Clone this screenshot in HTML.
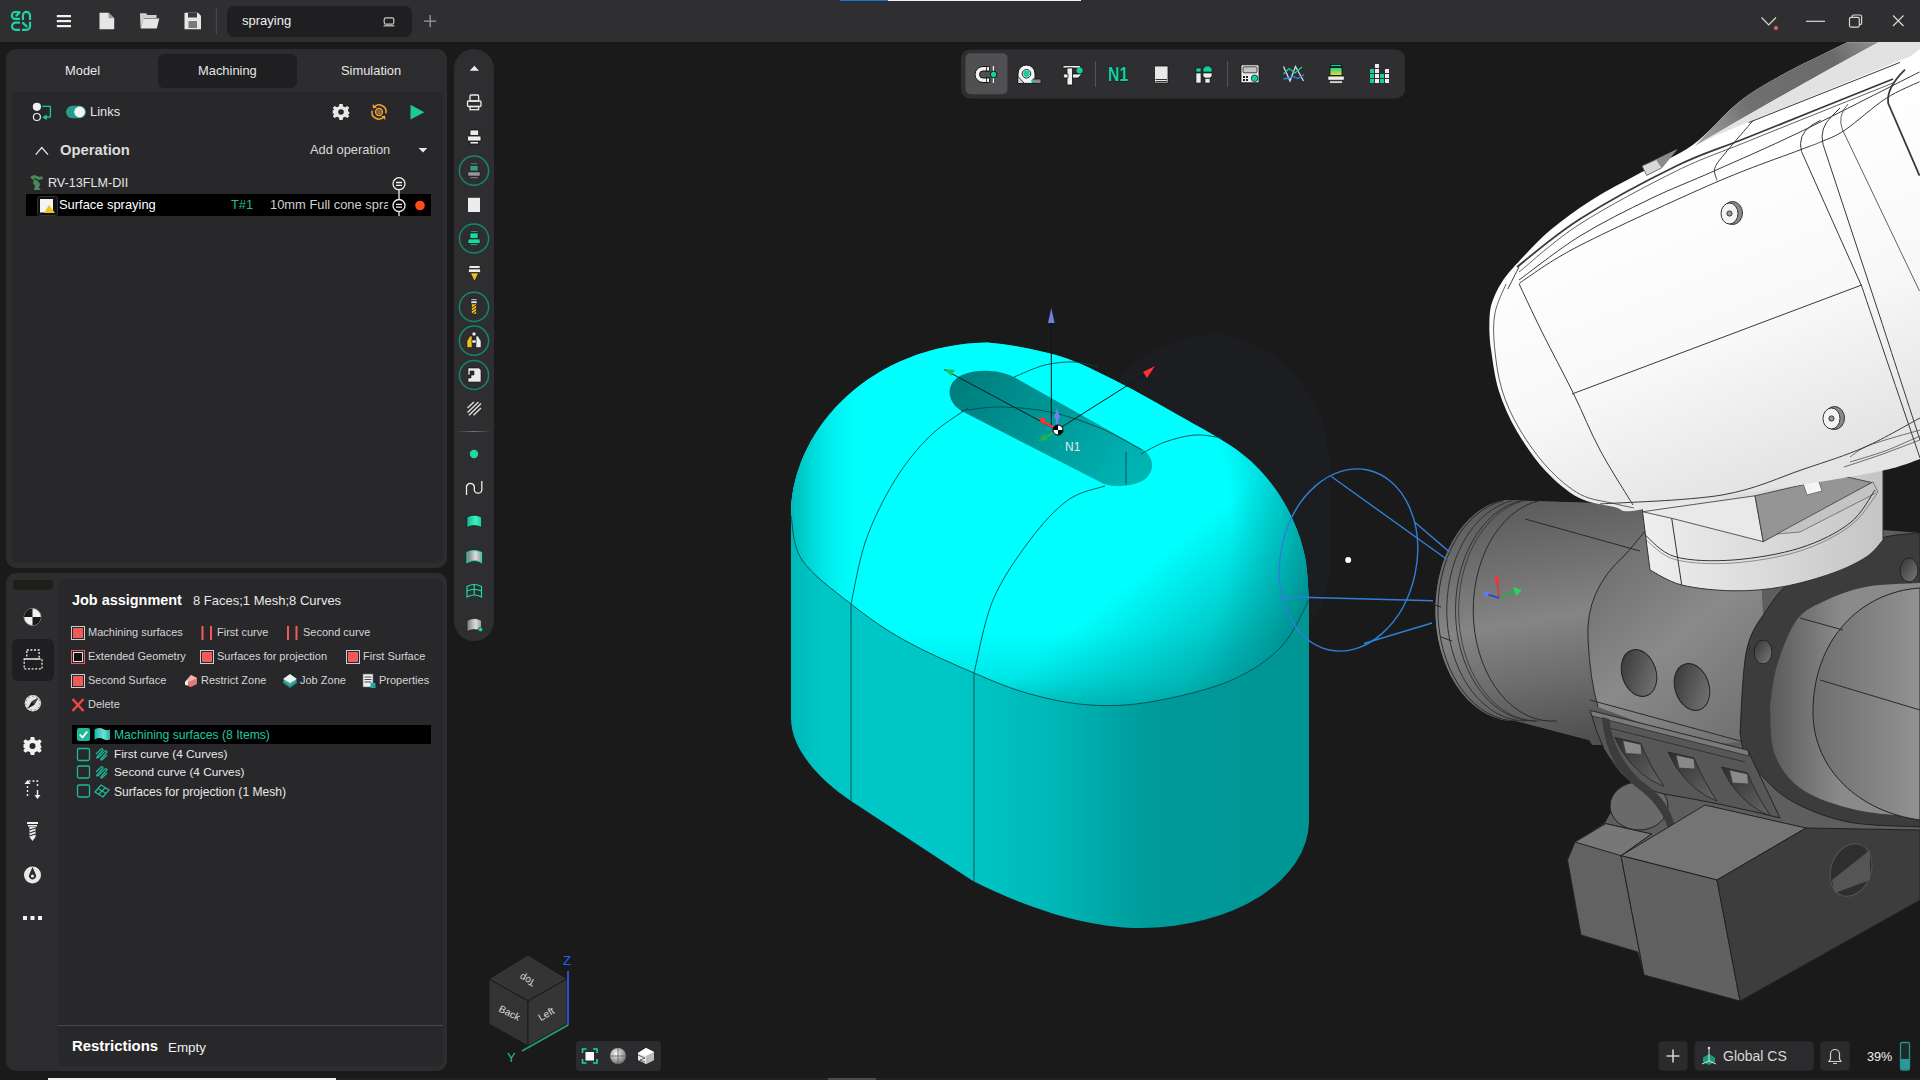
<!DOCTYPE html>
<html><head><meta charset="utf-8">
<style>
*{margin:0;padding:0;box-sizing:border-box}
html,body{width:1920px;height:1080px;overflow:hidden;background:#1a1a1a;font-family:"Liberation Sans",sans-serif;color:#e6e6e6}
.a{position:absolute}
.t{position:absolute;white-space:nowrap;line-height:1}
svg{position:absolute;overflow:visible}
</style></head><body>
<svg width="1920" height="1080" style="left:0;top:0"><path d="M1110 390 C1116.7 383.7 1132.0 361.3 1150.0 352.0 C1168.0 342.7 1196.3 332.7 1218.0 334.0 C1239.7 335.3 1263.3 347.3 1280.0 360.0 C1296.7 372.7 1309.7 393.3 1318.0 410.0 C1326.3 426.7 1328.0 451.7 1330.0 460.0 L1330 570 C1328.3 576.7 1326.7 598.3 1320.0 610.0 C1313.3 621.7 1295.0 635.0 1290.0 640.0 L1110 640 Z" fill="#1c1d21"/></svg>
<svg width="1920" height="1080" style="left:0;top:0"><defs>
<linearGradient id="gcyl" x1="1500" y1="500" x2="1540" y2="745" gradientUnits="userSpaceOnUse">
<stop offset="0" stop-color="#5a5a5a"/><stop offset="0.3" stop-color="#727272"/><stop offset="0.5" stop-color="#858585"/><stop offset="0.75" stop-color="#6c6c6c"/><stop offset="1" stop-color="#505050"/></linearGradient>
<linearGradient id="gclamp" x1="1590" y1="540" x2="1760" y2="740" gradientUnits="userSpaceOnUse">
<stop offset="0" stop-color="#6a6a6a"/><stop offset="0.5" stop-color="#8a8a8a"/><stop offset="1" stop-color="#6e6e6e"/></linearGradient>
<linearGradient id="gslot" x1="0" y1="0" x2="1" y2="1"><stop offset="0" stop-color="#2e2e2e"/><stop offset="1" stop-color="#666"/></linearGradient>
<linearGradient id="ghole" x1="0" y1="0" x2="1" y2="1"><stop offset="0" stop-color="#333"/><stop offset="1" stop-color="#7a7a7a"/></linearGradient>
<linearGradient id="gcyl2" x1="1770" y1="0" x2="1840" y2="0" gradientUnits="userSpaceOnUse"><stop offset="0" stop-color="#5a5a5a"/><stop offset="1" stop-color="#8a8a8a"/></linearGradient>
<linearGradient id="gcyl3" x1="1813" y1="0" x2="1920" y2="0" gradientUnits="userSpaceOnUse"><stop offset="0" stop-color="#6e6e6e"/><stop offset="1" stop-color="#929292"/></linearGradient>
<linearGradient id="wjoint" x1="1650" y1="0" x2="1885" y2="0" gradientUnits="userSpaceOnUse"><stop offset="0" stop-color="#eeeeee"/><stop offset="0.5" stop-color="#dadada"/><stop offset="1" stop-color="#c4c4c4"/></linearGradient>
<linearGradient id="warm" x1="1600" y1="200" x2="1720" y2="500" gradientUnits="userSpaceOnUse"><stop offset="0" stop-color="#ffffff"/><stop offset="0.55" stop-color="#f8f8f8"/><stop offset="1" stop-color="#e4e4e4"/></linearGradient>
<linearGradient id="wcap" x1="1490" y1="300" x2="1600" y2="400" gradientUnits="userSpaceOnUse"><stop offset="0" stop-color="#d0d0d0"/><stop offset="1" stop-color="#ececec"/></linearGradient>
<linearGradient id="wgroove" x1="1700" y1="140" x2="1870" y2="45" gradientUnits="userSpaceOnUse"><stop offset="0" stop-color="#a0a0a0"/><stop offset="0.3" stop-color="#707070"/><stop offset="0.8" stop-color="#6a6a6a"/><stop offset="1" stop-color="#8a8a8a"/></linearGradient>
</defs><path d="M1504 500 L1650 505 L1760 520 L1883 530 L1920 533 L1920 900 L1740 1001 L1644 975 L1638 952 L1581 935 L1567.5 860 L1575 842 L1605 823 L1612 810 L1624 790 L1631 782 Q1610 765 1601 740 L1589 740 L1516 721 A79 111 0 0 1 1504 500 Z" fill="#5e5e5e"/>
<path d="M1504 500 L1660 505 L1700 560 L1760 600 L1760 740 L1700 745 L1592 745 L1589 740 L1516 721 A79 111 0 0 1 1504 500 Z" fill="url(#gcyl)"/>
<path d="M1504.0 500.5 A79 111 0 0 0 1516.0 721" fill="none" stroke="#2a2a2a" stroke-width="1"/>
<path d="M1512.8 500.5 A79 111 0 0 0 1525.9 721" fill="none" stroke="#2a2a2a" stroke-width="0.9"/>
<path d="M1521.6 500.5 A79 111 0 0 0 1535.8 721" fill="none" stroke="#2a2a2a" stroke-width="0.9"/>
<path d="M1524.8 500.5 A79 111 0 0 0 1539.4 721" fill="none" stroke="#2a2a2a" stroke-width="0.7"/>
<path d="M1540.0 500.5 A79 111 0 0 0 1556.5 721" fill="none" stroke="#2a2a2a" stroke-width="1"/>
<path d="M1432 604 L1441 607 M1441 637 L1452 641" stroke="#2a2a2a" fill="none"/>
<path d="M1660 520 L1625 555 Q1585 590 1588 639 Q1590 680 1598 707 L1700 745 L1770 740 L1760 560 Z" fill="url(#gclamp)"/>
<path d="M1646 530 L1625 555 Q1585 590 1588 639 Q1590 680 1598 707" fill="none" stroke="#2a2a2a"/>
<path d="M1590 700 L1755 745" fill="none" stroke="#2a2a2a"/>
<path d="M1525 519 L1640 551" fill="none" stroke="#2a2a2a"/>
<ellipse cx="1639" cy="673" rx="17" ry="24" transform="rotate(-18 1639 673)" fill="url(#ghole)" stroke="#222"/>
<ellipse cx="1692" cy="687" rx="17" ry="24" transform="rotate(-18 1692 687)" fill="url(#ghole)" stroke="#222"/>
<path d="M1740 733 C1741.1 719.2 1742.2 670.5 1746.7 650.0 C1751.2 629.5 1759.0 621.7 1766.7 610.0 C1774.4 598.3 1779.7 590.0 1793.0 580.0 C1806.3 570.0 1831.1 557.2 1846.7 550.0 C1862.3 542.8 1874.5 539.5 1886.7 536.7 C1898.9 533.9 1914.5 533.6 1920.0 533.0 L1920 827 C1907.8 826.1 1868.4 826.2 1846.7 821.7 C1825.0 817.2 1805.0 808.6 1790.0 800.0 C1775.0 791.4 1764.5 778.3 1756.7 770.0 C1748.9 761.7 1745.3 753.3 1743.0 750.0 Z" fill="#3c3c3c" stroke="#222"/>
<ellipse cx="1763" cy="652" rx="9" ry="12" fill="url(#ghole)" stroke="#222"/>
<ellipse cx="1909" cy="570" rx="9" ry="12" fill="url(#ghole)" stroke="#222"/>
<path d="M1770 707 C1771.1 700.3 1772.2 681.2 1776.7 666.7 C1781.2 652.2 1788.4 631.1 1796.7 620.0 C1805.0 608.9 1815.0 605.5 1826.7 600.0 C1838.4 594.5 1851.2 589.5 1866.7 586.7 C1882.2 583.9 1911.1 583.6 1920.0 583.0 L1920 817 C1909.5 815.8 1876.2 814.5 1856.7 810.0 C1837.2 805.5 1816.6 799.2 1803.0 790.0 C1789.4 780.8 1780.5 768.8 1775.0 755.0 C1769.5 741.2 1770.8 715.0 1770.0 707.0 Z" fill="url(#gcyl2)"/>
<path d="M1920 588 C1860 592 1813 640 1813 712 C1813 770 1860 812 1920 820 Z" fill="url(#gcyl3)" stroke="#222"/>
<path d="M1800 618 L1843 630 M1820 680 L1920 710" stroke="#2a2a2a" fill="none"/>
<ellipse cx="1639" cy="806" rx="29" ry="24" fill="#6a6a6a" stroke="#222"/>
<path d="M1590.4 710.6 L1747.8 750.3 L1780 818 Q1720 803 1664 794 Q1625 785 1604 749 Q1595 730 1590.4 710.6 Z" fill="#575757" stroke="#222"/>
<path d="M1590.4 710.6 L1747.8 750.3 L1749 756 L1592 716 Z" fill="#7a7a7a" stroke="#222" stroke-width="0.7"/>
<path d="M1605 727 L1745 762" fill="none" stroke="#2a2a2a" stroke-width="0.8"/>
<path d="M1602 717 Q1605 765 1640 790 Q1660 805 1668 828 L1675 826 Q1668 800 1648 786 Q1615 762 1609 719 Z" fill="#3c3c3c"/>
<path d="M1614.8 737.4 L1640.8 743.4 Q1650.8 767.4 1663.8 786.4 Q1639.8 777.4 1622.8 752.4 Z" fill="url(#gslot)" stroke="#222" stroke-width="0.8"/>
<path d="M1622.8 740.4 L1640.8 744.4 L1641.8 754.4 L1625.8 753.4 Z" fill="#8a8a8a" stroke="#333" stroke-width="0.6"/>
<path d="M1668 752 L1694 758 Q1704 782 1717 801 Q1693 792 1676 767 Z" fill="url(#gslot)" stroke="#222" stroke-width="0.8"/>
<path d="M1676 755 L1694 759 L1695 769 L1679 768 Z" fill="#8a8a8a" stroke="#333" stroke-width="0.6"/>
<path d="M1721.5 767 L1747.5 773 Q1757.5 797 1770.5 816 Q1746.5 807 1729.5 782 Z" fill="url(#gslot)" stroke="#222" stroke-width="0.8"/>
<path d="M1729.5 770 L1747.5 774 L1748.5 784 L1732.5 783 Z" fill="#8a8a8a" stroke="#333" stroke-width="0.6"/>
<path d="M1567.5 860 L1575 842 L1605.7 823.6 L1651.5 834 L1621 855.7 L1644 975 L1637.8 952 L1581 935 Z" fill="#626262" stroke="#222"/>
<path d="M1575 842 L1605.7 823.6 L1651.5 834 L1621 855.7 Z" fill="#777" stroke="#222"/>
<path d="M1621 855.7 L1705 805 L1806 828 L1717 880 Z" fill="#747474" stroke="#222"/>
<path d="M1621 855.7 L1717 880 L1740 1001 L1644 975 Z" fill="#616161" stroke="#222"/>
<path d="M1717 880 L1806 828 L1920 830 L1920 900 L1740 1001 Z" fill="#3d3d3d" stroke="#222"/>
<ellipse cx="1851" cy="870" rx="20" ry="27" transform="rotate(20 1851 870)" fill="#2e2e2e" stroke="#555"/>
<path d="M1832 880 L1870 850 L1870 880 L1835 893 Z" fill="#555"/>
<path d="M1642.5 470 L1642.5 511.7 L1650 570 C1655.3 572.5 1667.9 581.5 1681.7 585.0 C1695.5 588.5 1716.1 590.5 1733.0 590.8 C1749.9 591.1 1766.3 589.7 1783.0 586.7 C1799.7 583.7 1819.0 578.0 1833.0 573.0 C1847.0 568.0 1858.4 562.2 1866.7 556.7 C1875.0 551.2 1880.3 542.8 1883.0 540.0 L1883 440 Z" fill="url(#wjoint)" stroke="#333" stroke-width="1"/>
<path d="M1642.5 511.7 L1755 495.8 L1763.3 541.7 L1671.7 518.3 Z" fill="#e9e9e9" stroke="#333" stroke-width="0.8"/>
<path d="M1755 495.8 L1841.7 475.8 L1871.7 482.5 L1763.3 541.7 Z" fill="#959595" stroke="#333" stroke-width="0.8"/>
<path d="M1777 534 L1873 482 L1878 492 L1800 532 Z" fill="#c4c4c4" stroke="#444" stroke-width="0.6"/>
<path d="M1803 483 L1818 479 L1822 491 L1807 495 Z" fill="#f4f4f4" stroke="#444" stroke-width="0.6"/>
<path d="M1671.7 518.3 L1681.7 585" fill="none" stroke="#333"/>
<path d="M1645.0 535.0 C1650.0 538.6 1660.3 552.5 1675.0 556.7 C1689.7 560.9 1712.2 561.5 1733.0 560.0 C1753.8 558.5 1780.5 554.2 1800.0 548.0 C1819.5 541.8 1837.5 532.7 1850.0 523.0 C1862.5 513.3 1870.8 495.5 1875.0 490.0" fill="none" stroke="#333"/>
<path d="M1645.0 539.0 C1650.0 542.4 1660.3 555.5 1675.0 559.5 C1689.7 563.5 1712.2 564.4 1733.0 563.0 C1753.8 561.6 1780.5 557.2 1800.0 551.0 C1819.5 544.8 1837.2 535.5 1850.0 526.0 C1862.8 516.5 1872.5 499.3 1877.0 494.0" fill="none" stroke="#555" stroke-width="0.6"/>
<path d="M1489.3 330.0 C1489.6 326.0 1488.9 314.0 1491.0 306.0 C1493.1 298.0 1497.0 289.7 1502.0 282.0 C1507.0 274.3 1512.6 268.3 1520.7 259.6 C1528.8 250.9 1538.7 239.9 1550.4 230.0 C1562.1 220.1 1575.9 210.0 1591.0 200.4 C1606.1 190.8 1624.0 181.9 1641.0 172.6 C1658.0 163.3 1676.7 156.6 1693.0 144.8 C1709.3 133.0 1723.9 113.8 1739.0 102.0 C1754.1 90.2 1765.6 84.0 1783.7 74.0 C1801.8 64.0 1836.8 47.5 1847.4 42.2 L1920 42 L1920 459 C1913.5 461.0 1903.8 466.2 1881.0 471.0 C1858.2 475.8 1814.8 482.8 1783.0 487.6 C1751.2 492.4 1715.2 496.1 1690.0 500.0 C1664.8 503.9 1644.6 509.8 1632.0 511.0 C1619.4 512.2 1623.2 509.2 1614.4 507.0 C1605.6 504.8 1590.4 503.8 1578.9 497.8 C1567.4 491.8 1556.0 482.1 1545.6 471.0 C1535.2 459.9 1524.5 444.3 1516.7 431.0 C1508.9 417.7 1503.2 404.5 1498.9 391.0 C1494.6 377.5 1492.7 360.2 1491.1 350.0 C1489.5 339.8 1489.6 333.3 1489.3 330.0 Z" fill="url(#warm)"/>
<path d="M1694.8 146 C1702.2 138.7 1724.2 114.0 1739.0 102.0 C1753.8 90.0 1765.6 84.0 1783.7 74.0 C1801.8 64.0 1836.8 47.5 1847.4 42.2 L1878.5 42.2 Q1790 90 1694.8 146 Z" fill="url(#wgroove)"/>
<path d="M1694.8 146 Q1790 90 1878.5 42.2 L1920 42 L1920 49 L1911 56 L1717 135 Z" fill="#e2e2e2"/>
<path d="M1642 166 L1656 159.6 L1677 149.4 L1661.5 168 L1646.7 175.4 Z" fill="#d8d8d8" stroke="#555" stroke-width="0.8"/><path d="M1656 159.6 L1677 149.4 L1661.5 168 Z" fill="#8a8a8a"/>
<path d="M1517.0 267.0 C1527.5 259.0 1553.5 235.8 1580.0 219.0 C1606.5 202.2 1648.2 179.7 1676.3 166.0 C1704.4 152.3 1712.5 151.5 1748.6 137.0 C1784.7 122.5 1868.9 88.7 1893.0 79.0" fill="none" stroke="#3a3a3a" stroke-width="1.8"/>
<path d="M1519.0 272.0 C1529.2 264.0 1553.8 240.8 1580.0 224.0 C1606.2 207.2 1648.2 184.8 1676.3 171.0 C1704.4 157.2 1712.5 155.7 1748.6 141.0 C1784.7 126.3 1868.9 92.7 1893.0 83.0" fill="none" stroke="#3a3a3a" stroke-width="0.8"/>
<path d="M1519.0 280.0 C1529.2 272.7 1558.2 249.5 1580.0 236.0 C1601.8 222.5 1627.5 209.9 1650.0 199.0 C1672.5 188.1 1689.8 181.9 1714.8 170.7 C1739.8 159.5 1765.9 148.4 1800.0 132.0 C1834.1 115.5 1899.6 82.0 1919.5 72.0" fill="none" stroke="#3a3a3a" stroke-width="1"/>
<path d="M1519.5 283.0 C1529.6 276.7 1547.5 262.1 1580.0 245.4 C1612.5 228.7 1678.3 198.7 1714.8 182.8 C1751.3 167.0 1781.3 157.1 1799.0 150.3 C1816.7 143.5 1813.1 145.3 1820.8 141.9 C1828.5 138.5 1834.2 137.2 1845.0 130.0 C1855.8 122.8 1873.4 106.5 1885.8 98.5 C1898.2 90.5 1913.9 84.5 1919.5 81.7" fill="none" stroke="#3a3a3a" stroke-width="1"/>
<path d="M1748.6 122.6 L1900 62.4" fill="none" stroke="#3a3a3a" stroke-width="1"/>
<path d="M1717.0 180.4 C1716.6 178.4 1713.5 172.8 1714.8 168.4 C1716.0 164.0 1718.1 162.0 1724.5 154.0 C1730.9 146.0 1748.6 125.8 1753.4 120.2" fill="none" stroke="#3a3a3a" stroke-width="1"/>
<path d="M1861.7 286.3 L1801.5 151.5 Q1797 135 1812 125 L1820.8 120.2" fill="none" stroke="#3a3a3a" stroke-width="1"/>
<path d="M1881 320 L1823 144.3 Q1819 128 1832 116 L1840 108" fill="none" stroke="#3a3a3a" stroke-width="1"/>
<path d="M1919.5 291 L1842.5 129.8 Q1837 116 1848 104" fill="none" stroke="#3a3a3a" stroke-width="0.8"/>
<path d="M1919.5 175.6 L1888.2 103.3 Q1886 88 1905 69.6" fill="none" stroke="#3a3a3a" stroke-width="1.8"/>
<path d="M1572 394 L1861.7 285" fill="none" stroke="#3a3a3a" stroke-width="1"/>
<path d="M1507.8 289.0 C1509.7 285.3 1517.1 270.7 1519.0 267.0" fill="none" stroke="#3a3a3a" stroke-width="1"/>
<path d="M1519.0 283.7 C1522.7 291.4 1531.9 311.6 1541.0 330.0 C1550.1 348.4 1563.9 374.0 1573.7 394.0 C1583.5 414.0 1590.1 431.5 1600.0 450.0 C1609.9 468.5 1627.5 495.8 1633.0 505.0" fill="none" stroke="#3a3a3a" stroke-width="1"/>
<path d="M1506.0 284.0 C1504.2 288.8 1496.9 302.6 1495.0 313.0 C1493.1 323.4 1493.3 333.9 1494.5 346.7 C1495.7 359.5 1497.8 376.3 1502.0 390.0 C1506.2 403.7 1511.8 416.0 1519.5 429.0 C1527.2 442.0 1537.8 457.1 1548.0 468.0 C1558.2 478.9 1569.5 488.6 1580.5 494.5 C1591.5 500.4 1605.1 501.2 1614.0 503.5 C1622.9 505.8 1630.7 507.2 1634.0 508.0" fill="none" stroke="#3a3a3a" stroke-width="0.8"/>
<path d="M1600.0 504.0 C1620.3 502.5 1688.0 500.8 1722.0 495.0 C1756.0 489.2 1780.2 477.0 1804.0 469.0 C1827.8 461.0 1845.7 455.5 1865.0 447.0 C1884.3 438.5 1910.8 422.8 1920.0 418.0" fill="none" stroke="#3a3a3a" stroke-width="1"/>
<path d="M1844.0 467.0 C1850.0 465.0 1867.3 459.5 1880.0 455.0 C1892.7 450.5 1913.3 442.5 1920.0 440.0" fill="none" stroke="#3a3a3a" stroke-width="0.7"/>
<path d="M1850.0 462.0 C1855.8 460.2 1873.3 455.3 1885.0 451.0 C1896.7 446.7 1914.2 438.5 1920.0 436.0" fill="none" stroke="#3a3a3a" stroke-width="0.7"/>
<path d="M1850.0 457.0 C1853.3 455.0 1858.3 449.5 1870.0 445.0 C1881.7 440.5 1911.7 432.5 1920.0 430.0" fill="none" stroke="#3a3a3a" stroke-width="0.7"/>
<path d="M1861.7 286.3 C1871.4 314.9 1910.3 429.4 1920.0 458.0" fill="none" stroke="#3a3a3a" stroke-width="1"/>
<path d="M1881.0 320.0 C1887.5 340.0 1913.5 420.0 1920.0 440.0" fill="none" stroke="#3a3a3a" stroke-width="1"/>
<ellipse cx="1732.5" cy="213" rx="10" ry="11.5" fill="#8a8a8a" stroke="#333"/><ellipse cx="1729.5" cy="213.5" rx="8.5" ry="10.5" fill="#f4f4f4" stroke="#333"/><circle cx="1729.5" cy="213.5" r="2.6" fill="#999" stroke="#333"/>
<ellipse cx="1834.5" cy="418" rx="10" ry="11.5" fill="#8a8a8a" stroke="#333"/><ellipse cx="1831.5" cy="418.5" rx="8.5" ry="10.5" fill="#f4f4f4" stroke="#333"/><circle cx="1831.5" cy="418.5" r="2.6" fill="#999" stroke="#333"/>
<g stroke-width="1.5" fill="none"><path d="M1499 598 L1497 580" stroke="#e03030"/><path d="M1499 598 L1517 590" stroke="#20b040"/><path d="M1499 598 L1486 594" stroke="#2040e0"/></g>
<path d="M1494 582 L1497 574 L1500 582 Z" fill="#ff3030"/><path d="M1513 587 L1522 590 L1516 596 Z" fill="#30d060"/><path d="M1489 590 L1483 593 L1488 597 Z" fill="#5080ff"/></svg>
<svg width="1920" height="1080" style="left:0;top:0">
<defs>
<linearGradient id="cside" x1="791" y1="0" x2="1309" y2="0" gradientUnits="userSpaceOnUse">
<stop offset="0" stop-color="#00b8b8"/><stop offset="0.06" stop-color="#00c6c6"/><stop offset="0.3" stop-color="#00c8c8"/>
<stop offset="0.5" stop-color="#00b8b8"/><stop offset="0.7" stop-color="#009a9a"/><stop offset="1" stop-color="#009595"/>
</linearGradient>
<linearGradient id="ctop" x1="1040" y1="420" x2="1270" y2="700" gradientUnits="userSpaceOnUse">
<stop offset="0" stop-color="#00ffff"/><stop offset="0.5" stop-color="#00ffff"/><stop offset="0.8" stop-color="#00c0c0"/><stop offset="1" stop-color="#009090"/>
</linearGradient>
<linearGradient id="cleft" x1="791" y1="0" x2="870" y2="0" gradientUnits="userSpaceOnUse">
<stop offset="0" stop-color="#00b0b0" stop-opacity="0.9"/><stop offset="1" stop-color="#00ffff" stop-opacity="0"/>
</linearGradient>
<linearGradient id="slot" x1="960" y1="380" x2="1130" y2="480" gradientUnits="userSpaceOnUse">
<stop offset="0" stop-color="#007e7e"/><stop offset="0.5" stop-color="#009898"/><stop offset="1" stop-color="#00b4b4"/>
</linearGradient>
<radialGradient id="cright" cx="950" cy="530" r="370" gradientUnits="userSpaceOnUse">
<stop offset="0" stop-color="#008a8a" stop-opacity="0"/><stop offset="0.76" stop-color="#008a8a" stop-opacity="0"/><stop offset="0.9" stop-color="#008a8a" stop-opacity="0.4"/><stop offset="1" stop-color="#008080" stop-opacity="0.75"/>
</radialGradient>
<linearGradient id="cfil" x1="0" y1="630" x2="0" y2="706" gradientUnits="userSpaceOnUse">
<stop offset="0" stop-color="#00a8a8" stop-opacity="0"/><stop offset="0.6" stop-color="#00a8a8" stop-opacity="0.25"/><stop offset="1" stop-color="#00a0a0" stop-opacity="0.6"/>
</linearGradient>
</defs>
<path d="M791 516 C791 430 870 345 987 342.5 C1006.8 344.0 1037.2 349.4 1059.0 356.0 C1080.8 362.6 1098.2 372.2 1118.0 382.0 C1137.8 391.8 1158.2 403.7 1178.0 415.0 C1197.8 426.3 1221.7 438.8 1237.0 450.0 C1252.3 461.2 1260.8 470.7 1270.0 482.0 C1279.2 493.3 1286.2 505.5 1292.0 518.0 C1297.8 530.5 1302.2 543.3 1305.0 557.0 C1307.8 570.7 1308.3 592.8 1309.0 600.0 L1309 821 A169 107 0 0 1 1140 928 C1100 928 1040 915 972.6 880.7 L851 801 C820 780 791 750 791 718 Z" fill="url(#cside)"/>
<path d="M791 516 C791 430 870 345 987 342.5 C1006.8 344.0 1037.2 349.4 1059.0 356.0 C1080.8 362.6 1098.2 372.2 1118.0 382.0 C1137.8 391.8 1158.2 403.7 1178.0 415.0 C1197.8 426.3 1221.7 438.8 1237.0 450.0 C1252.3 461.2 1260.8 470.7 1270.0 482.0 C1279.2 493.3 1286.2 505.5 1292.0 518.0 C1297.8 530.5 1302.2 543.3 1305.0 557.0 C1307.8 570.7 1308.3 592.8 1309.0 600.0 C1304.3 607.8 1294.2 633.5 1281.0 647.0 C1267.8 660.5 1251.0 671.9 1229.5 681.0 C1208.0 690.1 1175.0 697.7 1151.8 701.7 C1128.5 705.7 1110.3 706.3 1090.0 705.0 C1069.7 703.7 1049.3 699.3 1030.0 694.0 C1010.7 688.7 995.0 682.0 974.0 673.0 C953.0 664.0 924.5 651.5 904.0 640.0 C883.5 628.5 868.0 617.3 851.0 604.0 C834.0 590.7 812.0 574.7 802.0 560.0 C792.0 545.3 792.8 523.3 791.0 516.0 Z" fill="url(#ctop)"/>
<path d="M791 516 C791 430 870 345 987 342.5 C1006.8 344.0 1037.2 349.4 1059.0 356.0 C1080.8 362.6 1098.2 372.2 1118.0 382.0 C1137.8 391.8 1158.2 403.7 1178.0 415.0 C1197.8 426.3 1221.7 438.8 1237.0 450.0 C1252.3 461.2 1260.8 470.7 1270.0 482.0 C1279.2 493.3 1286.2 505.5 1292.0 518.0 C1297.8 530.5 1302.2 543.3 1305.0 557.0 C1307.8 570.7 1308.3 592.8 1309.0 600.0 C1304.3 607.8 1294.2 633.5 1281.0 647.0 C1267.8 660.5 1251.0 671.9 1229.5 681.0 C1208.0 690.1 1175.0 697.7 1151.8 701.7 C1128.5 705.7 1110.3 706.3 1090.0 705.0 C1069.7 703.7 1049.3 699.3 1030.0 694.0 C1010.7 688.7 995.0 682.0 974.0 673.0 C953.0 664.0 924.5 651.5 904.0 640.0 C883.5 628.5 868.0 617.3 851.0 604.0 C834.0 590.7 812.0 574.7 802.0 560.0 C792.0 545.3 792.8 523.3 791.0 516.0 Z" fill="url(#cleft)"/>
<path d="M791 516 C791 430 870 345 987 342.5 C1006.8 344.0 1037.2 349.4 1059.0 356.0 C1080.8 362.6 1098.2 372.2 1118.0 382.0 C1137.8 391.8 1158.2 403.7 1178.0 415.0 C1197.8 426.3 1221.7 438.8 1237.0 450.0 C1252.3 461.2 1260.8 470.7 1270.0 482.0 C1279.2 493.3 1286.2 505.5 1292.0 518.0 C1297.8 530.5 1302.2 543.3 1305.0 557.0 C1307.8 570.7 1308.3 592.8 1309.0 600.0 C1304.3 607.8 1294.2 633.5 1281.0 647.0 C1267.8 660.5 1251.0 671.9 1229.5 681.0 C1208.0 690.1 1175.0 697.7 1151.8 701.7 C1128.5 705.7 1110.3 706.3 1090.0 705.0 C1069.7 703.7 1049.3 699.3 1030.0 694.0 C1010.7 688.7 995.0 682.0 974.0 673.0 C953.0 664.0 924.5 651.5 904.0 640.0 C883.5 628.5 868.0 617.3 851.0 604.0 C834.0 590.7 812.0 574.7 802.0 560.0 C792.0 545.3 792.8 523.3 791.0 516.0 Z" fill="url(#cright)"/>
<path d="M791 516 C791 430 870 345 987 342.5 C1006.8 344.0 1037.2 349.4 1059.0 356.0 C1080.8 362.6 1098.2 372.2 1118.0 382.0 C1137.8 391.8 1158.2 403.7 1178.0 415.0 C1197.8 426.3 1221.7 438.8 1237.0 450.0 C1252.3 461.2 1260.8 470.7 1270.0 482.0 C1279.2 493.3 1286.2 505.5 1292.0 518.0 C1297.8 530.5 1302.2 543.3 1305.0 557.0 C1307.8 570.7 1308.3 592.8 1309.0 600.0 C1304.3 607.8 1294.2 633.5 1281.0 647.0 C1267.8 660.5 1251.0 671.9 1229.5 681.0 C1208.0 690.1 1175.0 697.7 1151.8 701.7 C1128.5 705.7 1110.3 706.3 1090.0 705.0 C1069.7 703.7 1049.3 699.3 1030.0 694.0 C1010.7 688.7 995.0 682.0 974.0 673.0 C953.0 664.0 924.5 651.5 904.0 640.0 C883.5 628.5 868.0 617.3 851.0 604.0 C834.0 590.7 812.0 574.7 802.0 560.0 C792.0 545.3 792.8 523.3 791.0 516.0 Z" fill="url(#cfil)"/>
<path d="M961.6 411 C945 401 946 382 962 375 C975 369 998 369 1014 377 L1142.8 449.6 C1156 458 1155 476 1140 482 C1130 486 1117 488 1104 484 Z" fill="url(#slot)"/>
<g fill="none" stroke="#0a4a4a" stroke-width="1" opacity="0.9">
<path d="M1309.0 600.0 C1304.3 607.8 1294.2 633.5 1281.0 647.0 C1267.8 660.5 1251.0 671.9 1229.5 681.0 C1208.0 690.1 1175.0 697.7 1151.8 701.7 C1128.5 705.7 1110.3 706.3 1090.0 705.0 C1069.7 703.7 1049.3 699.3 1030.0 694.0 C1010.7 688.7 995.0 682.0 974.0 673.0 C953.0 664.0 924.5 651.5 904.0 640.0 C883.5 628.5 868.0 617.3 851.0 604.0 C834.0 590.7 812.0 574.7 802.0 560.0 C792.0 545.3 792.8 523.3 791.0 516.0"/>
<path d="M851 801 L851 604 C853.5 593.3 858.7 560.7 866.0 540.0 C873.3 519.3 884.3 497.3 895.0 480.0 C905.7 462.7 917.8 448.0 930.0 436.0 C942.2 424.0 961.7 412.7 968.0 408.0"/>
<path d="M974 881 L974 673 C977.2 660.8 983.7 622.2 993.0 600.0 C1002.3 577.8 1017.5 556.7 1030.0 540.0 C1042.5 523.3 1055.5 509.0 1068.0 500.0 C1080.5 491.0 1098.8 488.3 1105.0 486.0"/>
<path d="M1014.0 377.0 C1019.2 375.0 1034.8 367.5 1045.0 365.0 C1055.2 362.5 1066.2 361.7 1075.0 362.0 C1083.8 362.3 1094.2 366.2 1098.0 367.0"/>
<path d="M1141.0 454.0 C1145.0 452.0 1156.0 445.2 1165.0 442.0 C1174.0 438.8 1185.5 435.7 1195.0 435.0 C1204.5 434.3 1217.5 437.5 1222.0 438.0"/>
<path d="M961.0 411.0 C967.5 410.3 985.2 406.8 1000.0 407.0 C1014.8 407.2 1033.3 408.5 1050.0 412.0 C1066.7 415.5 1084.7 421.7 1100.0 428.0 C1115.3 434.3 1135.0 446.3 1142.0 450.0"/>
<path d="M1126 452 L1126 485"/>
</g>
</svg>
<svg width="1920" height="1080" style="left:0;top:0"><g fill="none" stroke="#2f7fd8" stroke-width="1.4">
<ellipse cx="1348.5" cy="560" rx="68" ry="92" transform="rotate(12 1348.5 560)"/>
<path d="M1331.3 476.5 L1446.4 559 M1414.8 522.3 L1449.4 551.9 M1282.4 596.7 L1433 600.7 M1364 643.5 L1432 623"/>
</g>
<circle cx="1348.2" cy="560" r="3" fill="#fff"/>
<g stroke="#0b1a1a" stroke-width="1" fill="none"><path d="M1051.3 318 L1051.3 427"/><path d="M1057 430 L1155 368"/><path d="M1057 430 L944 369.6"/></g>
<path d="M1048 323 L1051.3 308 L1054.6 323 Z" fill="#7080e0"/>
<path d="M1143 372 L1155 366 L1147 378 Z" fill="#ff3030"/>
<path d="M944 369 L955 370 L951 376 Z" fill="#20c060"/>
<path d="M1057 428 L1057 416" stroke="#7080f0" stroke-width="2.5"/><path d="M1054 418 L1057 408 L1060 418 Z" fill="#7080f0"/>
<path d="M1056 429 L1044 422" stroke="#ff3030" stroke-width="2.5"/><path d="M1046 418 L1038 418 L1043 425 Z" fill="#ff3030"/>
<path d="M1056 431 L1046 437" stroke="#20b050" stroke-width="2.5"/><path d="M1044 434 L1038 441 L1048 440 Z" fill="#20b050"/>
<circle cx="1058" cy="430" r="5" fill="#fff" stroke="#000" stroke-width="1"/><path d="M1058 425 A5 5 0 0 0 1053 430 L1058 430 Z M1058 430 L1063 430 A5 5 0 0 1 1058 435 Z" fill="#000"/>
<text x="1065" y="451" font-family="Liberation Sans" font-size="12" fill="#e8e8e8">N1</text>
<g stroke="#1a1a1a" stroke-width="1">
<path d="M528 955 L567 979 L528 1001 L489 979 Z" fill="#343434"/>
<path d="M489 979 L528 1001 L528 1046 L489 1024 Z" fill="#333"/>
<path d="M528 1001 L567 979 L567 1024 L528 1046 Z" fill="#353535"/>
</g>
<path d="M568 971 L568 1025" stroke="#2f4fd0" stroke-width="2"/><path d="M568 1025 L522 1051" stroke="#1f9f6f" stroke-width="2"/>
<text x="563" y="965" font-family="Liberation Sans" font-size="13" fill="#2060ff">Z</text>
<text x="507" y="1062" font-family="Liberation Sans" font-size="13" fill="#20c080">Y</text>
<text transform="translate(529 977) rotate(208)" font-family="Liberation Sans" font-size="10" fill="#ddd" text-anchor="middle">Top</text>
<text transform="translate(508 1016) rotate(27)" font-family="Liberation Sans" font-size="10" fill="#ddd" text-anchor="middle">Back</text>
<text transform="translate(548 1017) rotate(-30)" font-family="Liberation Sans" font-size="10" fill="#ddd" text-anchor="middle">Left</text></svg>
<!-- TOP BAR -->
<div class="a" style="left:0;top:0;width:1920px;height:42px;background:#2f2f31"></div>
<div class="a" style="left:840px;top:0;width:48px;height:1px;background:#1177dd"></div>
<div class="a" style="left:888px;top:0;width:193px;height:1px;background:#f4f4f4"></div>
<div class="a" style="left:227px;top:6px;width:185px;height:31px;background:#1f1f21;border-radius:7px"></div>
<div class="t" style="left:242px;top:14px;font-size:13px;color:#f0f0f0">spraying</div>

<!-- LEFT UPPER PANEL -->
<div class="a" style="left:6px;top:49px;width:441px;height:519px;background:#2d2d2f;border-radius:10px"></div>
<div class="a" style="left:158px;top:54px;width:139px;height:34px;background:#1f1f21;border-radius:6px"></div>
<div class="t" style="left:65px;top:65px;font-size:12.9px">Model</div>
<div class="t" style="left:198px;top:65px;font-size:12.9px">Machining</div>
<div class="t" style="left:341px;top:65px;font-size:12.9px">Simulation</div>
<div class="a" style="left:12px;top:92px;width:431px;height:471px;background:#28282a;border-radius:6px"></div>
<div class="t" style="left:90px;top:106px;font-size:12.9px">Links</div>
<div class="t" style="left:60px;top:143px;font-size:14.8px;font-weight:bold;color:#dcdcdc">Operation</div>
<div class="t" style="left:310px;top:144px;font-size:12.9px;color:#d8d8d8">Add operation</div>
<div class="t" style="left:48px;top:177px;font-size:12.6px">RV-13FLM-DII</div>
<div class="a" style="left:26px;top:194px;width:405px;height:22px;background:#000"></div>
<div class="t" style="left:59px;top:199px;font-size:12.9px;color:#fff">Surface spraying</div>
<div class="t" style="left:231px;top:199px;font-size:12.9px;color:#1fbf8f">T#1</div>
<div class="a" style="left:270px;top:194px;width:118px;height:22px;overflow:hidden"><div class="t" style="left:0;top:5px;font-size:12.9px;color:#d0d0d0">10mm Full cone spray</div></div>

<!-- LEFT LOWER PANEL -->
<div class="a" style="left:6px;top:573px;width:441px;height:498px;background:#2d2d2f;border-radius:10px"></div>
<div class="a" style="left:58px;top:579px;width:385px;height:487px;background:#28282a;border-radius:6px"></div>
<div class="a" style="left:58px;top:1025px;width:385px;height:1px;background:#474749"></div>
<div class="t" style="left:72px;top:593px;font-size:14.45px;font-weight:bold;color:#fff">Job assignment</div>
<div class="t" style="left:193px;top:594px;font-size:13px;color:#e8e8e8">8 Faces;1 Mesh;8 Curves</div>
<div class="t" style="left:72px;top:1039px;font-size:14.9px;font-weight:bold;color:#fff">Restrictions</div>
<div class="t" style="left:168px;top:1041px;font-size:13.4px;color:#eee">Empty</div>
<div class="a" style="left:336px;top:1078px;width:1584px;height:2px;background:#202323"></div>
<div class="a" style="left:48px;top:1078px;width:288px;height:2px;background:#f0f0f0"></div>

<!-- VERTICAL TOOLBAR -->


<!-- TOP TOOLBAR -->


<svg style="left:0px;top:0px" width="42" height="42" viewBox="0 0 42 42"><g fill="none" stroke="#1dd3a3" stroke-width="2.2" stroke-linecap="butt">
<path d="M20 12 L15.3 12 A3.45 3.45 0 0 0 15.3 18.9 L20 18.9"/><path d="M19.6 12.6 L16.3 15.6" stroke-linecap="round"/>
<path d="M22.9 20 L22.9 15.5 A3.55 3.55 0 0 1 30 15.5 L30 20"/>
<path d="M20 22.7 L15.6 22.7 A3.6 3.6 0 0 0 15.6 29.9 L20 29.9"/>
<path d="M30 21.8 L30 26.3 A3.6 3.6 0 0 1 26.4 29.9 L22 29.9"/><path d="M22.9 22.9 L26.6 26.4" stroke-linecap="round"/>
</g></svg>
<svg style="left:0px;top:0px" width="220" height="42" viewBox="0 0 220 42"><g fill="#f2f2f2">
<rect x="56.8" y="15" width="14.2" height="2.2"/><rect x="56.8" y="20" width="14.2" height="2.2"/><rect x="56.8" y="25" width="14.2" height="2.2"/>
<path d="M99.5 12.7 L108.5 12.7 L114.2 18.3 L114.2 29.2 L99.5 29.2 Z" fill="#e6e6e6"/><path d="M108.5 12.7 L108.5 18.3 L114.2 18.3 Z" fill="#9a9a9a"/>
<path d="M140 13.3 L146 13.3 L147.5 15 L156.5 15 L156.5 18 L144 18 L140.5 28.6 Z" fill="#cfcfcf"/><path d="M143.5 18.5 L159.3 18.5 L156.8 28.6 L140.8 28.6 Z" fill="#e6e6e6"/>
<path d="M184.5 12.7 L198 12.7 L201 15.7 L201 29.2 L184.5 29.2 Z" fill="#e6e6e6"/><rect x="188" y="13" width="9" height="4.5" fill="#3a3a3a"/><rect x="188.5" y="21" width="8.5" height="7" fill="#7a7a7a"/>
</g><rect x="215.8" y="8" width="1" height="26" fill="#4c4c4e"/></svg>
<svg style="left:370px;top:0px" width="80" height="42" viewBox="0 0 80 42"><g fill="none" stroke="#c8c8c8" stroke-width="1.2"><rect x="14.2" y="17.8" width="9.6" height="6.4" rx="1.8"/><path d="M13.6 25.8 L24.4 25.8"/></g>
<g stroke="#9a9a9a" stroke-width="1.3"><path d="M60 21.2 L66.3 21.2 M54 21.2 L66.3 21.2 M60.2 15 L60.2 27.3"/></g></svg>
<svg style="left:1740px;top:0px" width="180" height="42" viewBox="0 0 180 42"><g fill="none" stroke="#d8d8d8" stroke-width="1.2">
<path d="M21.5 17.5 L28.7 24.8 L36 17.5"/>
<path d="M66 21.3 L85 21.3"/>
<rect x="109.5" y="17.3" width="9.8" height="9.8" rx="1.5"/><path d="M112 17.2 L112 16.6 A1.6 1.6 0 0 1 113.6 15 L120 15 A1.6 1.6 0 0 1 121.6 16.6 L121.6 23 A1.6 1.6 0 0 1 120 24.6 L119.4 24.6"/>
<path d="M153 15.5 L163.5 26 M163.5 15.5 L153 26"/>
</g><circle cx="36" cy="28" r="2" fill="#ff5a5a"/></svg>
<svg style="left:0px;top:0px" width="450" height="230" viewBox="0 0 450 230">
<circle cx="36.9" cy="106.8" r="4.1" fill="#f0f0f0"/><circle cx="36.9" cy="117" r="3.5" fill="none" stroke="#ececec" stroke-width="1.2"/>
<path d="M42.2 106.3 L49.6 106.3 Q50.4 106.3 50.4 107.1 L50.4 116.4 Q50.4 117.2 49.6 117.2 L45 117.2" fill="none" stroke="#0fd09c" stroke-width="1.3"/><path d="M42.2 117.2 L46.8 114.6 L46.8 120 Z" fill="#0fd09c"/>
<rect x="66" y="105.8" width="20" height="12.5" rx="6.25" fill="#2a9a8e"/><circle cx="79.6" cy="112" r="5.4" fill="#f4f4f4"/>
<g transform="translate(341 112)"><path d="M-1.6 -8 L1.6 -8 L2.1 -5.6 L4.2 -4.7 L6.3 -6.1 L8.2 -4.2 L6.8 -2.1 L7.7 0 L8.3 0 L8.3 1.6 L7.7 2.3 L6.8 2.1 L8.2 4.2 L6.3 6.1 L4.2 4.7 L2.1 5.6 L1.6 8 L-1.6 8 L-2.1 5.6 L-4.2 4.7 L-6.3 6.1 L-8.2 4.2 L-6.8 2.1 L-7.7 1.6 L-8.3 1.6 L-8.3 -1.6 L-7.7 -2.1 L-6.8 -2.1 L-8.2 -4.2 L-6.3 -6.1 L-4.2 -4.7 L-2.1 -5.6 Z" fill="#e8e8e8"/><circle r="2.8" fill="#28282a"/></g>
<g transform="translate(379 112)"><g fill="none" stroke="#eea43a" stroke-width="1.5"><path d="M-5 -4.6 A6.8 6.8 0 0 1 6.8 1.4"/><path d="M-6.8 -1.4 A6.8 6.8 0 0 0 5 4.6"/><circle r="3.4"/></g><circle r="2.6" fill="#8a6a34"/><path d="M-6.2 -8 L-6.2 -3.8 L-2.2 -4.2 Z M6.2 8 L6.2 3.8 L2.2 4.2 Z" fill="#eea43a"/></g>
<path d="M410.5 104.7 L424.3 112.2 L410.5 119.6 Z" fill="#1fc79a"/>
<path d="M35.7 154.6 L41.8 147.6 L48 154.6" fill="none" stroke="#e6e6e6" stroke-width="1.3"/>
<path d="M418.6 148 L427.3 148 L423 152.5 Z" fill="#e6e6e6"/>
<g fill="#4a8a5a"><path d="M30 177 L34 175 L40 177 L42 176 L43 179 L39 180 L35 178 L33 180 Z"/><path d="M34 179 L38 181 L40 184 L39 188 L41 190 L34 190 L35 186 L33 183 Z"/></g>
<rect x="37.5" y="196.5" width="20" height="19" rx="2" fill="#111" stroke="#333" stroke-width="1"/><rect x="40" y="199" width="13" height="13.5" fill="#f4f4f4"/><path d="M49 205 L55 213 L44 213 Z" fill="#f0c020"/>
<g fill="none" stroke="#f0f0f0" stroke-width="1.3"><circle cx="399" cy="183.7" r="6"/><path d="M396 182.5 L402 182.5 M396 185.3 L402 185.3"/><path d="M399 189.7 L399 199"/><circle cx="399" cy="205.5" r="6"/><path d="M396 204.3 L402 204.3 M396 207.1 L402 207.1"/><path d="M399 211.5 L399 216"/></g>
<circle cx="420" cy="205.5" r="4.8" fill="#ff4a1a"/>
</svg>
<div class="a" style="left:13px;top:580px;width:40px;height:10px;background:#1e1e1b;border-radius:3px"></div>
<div class="a" style="left:12px;top:639px;width:42px;height:42px;background:#1f1f21;border-radius:6px"></div>
<svg style="left:0px;top:590px" width="58" height="350" viewBox="0 0 58 350">
<g transform="translate(32.5 27)"><circle r="8.5" fill="#f0f0f0" stroke="#999" stroke-width="0.8"/><path d="M0 -8.5 A8.5 8.5 0 0 0 -8.5 0 L0 0 Z M0 0 L8.5 0 A8.5 8.5 0 0 1 0 8.5 Z" fill="#1a1a1a"/></g>
<g fill="none" stroke="#f0f0f0" stroke-width="1.3" stroke-dasharray="2 1.6"><rect x="26.8" y="60" width="12.3" height="9"/><rect x="24.2" y="69" width="17.8" height="9.8"/></g>
<g transform="translate(32.9 113.2)"><circle r="8.2" fill="#e4e4e4"/><circle r="7" fill="none" stroke="#2a2a2a" stroke-width="0.6" stroke-dasharray="1.5 2.5"/><path d="M5.5 -5.5 L1.2 1.8 L-5.5 5.5 L-1.2 -1.8 Z" fill="#1c1c1c"/><path d="M5.5 -5.5 L1.2 1.8 L-1.2 -1.8 Z" fill="#444"/></g>
<g transform="translate(32.5 156)"><path d="M-1.8 -9 L1.8 -9 L2.3 -6.3 L4.7 -5.3 L7 -6.8 L9.2 -4.7 L7.6 -2.3 L8.6 0 L9 1.8 L8.6 2.3 L7.6 2.3 L9.2 4.7 L7 6.8 L4.7 5.3 L2.3 6.3 L1.8 9 L-1.8 9 L-2.3 6.3 L-4.7 5.3 L-7 6.8 L-9.2 4.7 L-7.6 2.3 L-9 1.8 L-9 -1.8 L-7.6 -2.3 L-9.2 -4.7 L-7 -6.8 L-4.7 -5.3 L-2.3 -6.3 Z" fill="#f0f0f0"/><circle r="3" fill="#28282a"/></g>
<g transform="translate(32.5 199)" stroke="#f0f0f0" stroke-width="1.4" fill="none"><path d="M-4 -8 L5 -8 L5 -3" stroke-dasharray="2 2"/><path d="M-5 -3 L-5 9" stroke-dasharray="2 2"/><path d="M-5 -9 L-8 -5 L-2 -5 Z" fill="#f0f0f0" stroke="none"/><path d="M5 1 L5 6" /><path d="M5 10 L2 6 L8 6 Z" fill="#f0f0f0" stroke="none"/></g>
<g transform="translate(32.5 241)" fill="#f0f0f0"><rect x="-5.5" y="-9" width="11" height="2"/><rect x="-4.5" y="-6" width="9" height="1.5"/><path d="M-3 -4 L3 -4 L3 6 L0 10 L-3 6 Z"/><path d="M-3 -1 L3 -3 M-3 2 L3 0 M-3 5 L3 3" stroke="#28282a" stroke-width="1.2"/></g>
<g transform="translate(32.5 285)"><circle r="8.5" fill="#e8e8e8"/><path d="M0 -8 L-3 -1 A3.5 3.5 0 1 0 3 -1 Z" fill="#28282a"/><circle cy="1" r="1.6" fill="#e8e8e8"/></g>
<g fill="#f0f0f0"><rect x="23" y="326" width="4" height="4"/><rect x="30.5" y="326" width="4" height="4"/><rect x="38" y="326" width="4" height="4"/></g>
</svg>
<svg style="left:0;top:0" width="1920" height="110"><defs><linearGradient id="stackg" x1="0" y1="0" x2="0" y2="1"><stop offset="0" stop-color="#0fd0a0"/><stop offset="1" stop-color="#f0e020"/></linearGradient></defs>
<rect x="961" y="49.5" width="444" height="49" rx="9" fill="#2f2f31"/>
<rect x="965.5" y="53.2" width="42" height="41" rx="5" fill="#505052"/>
<g>
<path d="M989.5 66.5 L983 66.5 A8 8 0 0 0 983 82.5 L989.5 82.5 L989.5 78 L983 78 A3.5 3.5 0 0 1 983 71 L989.5 71 Z" fill="#efefef" stroke="#111" stroke-width="1"/>
<rect x="986.5" y="66.5" width="3" height="4.5" fill="#efefef" stroke="#111" stroke-width="0.8"/><rect x="986.5" y="78" width="3" height="4.5" fill="#efefef" stroke="#111" stroke-width="0.8"/>
<path d="M993.4 66 L993.4 83" stroke="#f0f0f0" stroke-width="1.2"/><circle cx="993.6" cy="74.4" r="3.3" fill="#0fd0a0" stroke="#111" stroke-width="1"/>
</g>
<g>
<path d="M1018 83.4 L1018 73.5 A8.5 8.5 0 0 1 1026.5 65 A8.5 8.5 0 0 1 1035 73.5 L1035 83.4 Z" fill="#f4f4f4" stroke="#111" stroke-width="1"/>
<path d="M1018.5 77 L1024 83" stroke="#111" stroke-width="1"/><path d="M1018.5 77.5 L1023.5 83 L1018.5 83 Z" fill="#ccc"/>
<circle cx="1026.5" cy="73.8" r="4.3" fill="none" stroke="#222" stroke-width="1"/><circle cx="1026.5" cy="73.8" r="3.2" fill="#0fd0a0"/>
<rect x="1033" y="79" width="8" height="4.5" fill="#888" stroke="#111" stroke-width="0.8"/><circle cx="1032.6" cy="81" r="1.6" fill="#0fd0a0"/>
</g>
<g fill="#efefef" stroke="#111" stroke-width="0.8">
<path d="M1063 65.5 L1080 65.5 L1081 68 L1063 68 Z"/>
<rect x="1067" y="68" width="5.5" height="17"/>
<path d="M1063 74 L1068 74 L1068 78 L1064 78 Z"/><path d="M1072.5 74 L1082 74 L1078 78 L1072.5 78 Z"/>
</g>
<circle cx="1079.6" cy="70.5" r="3" fill="#0fd0a0"/>
<rect x="1095" y="61" width="1" height="26" fill="#555"/>
<text x="0" y="0" transform="translate(1108 81.4) scale(0.8 1)" style="font-family:'Liberation Sans';font-weight:bold;font-size:19.8px" fill="#0fd0a0" stroke="#1a1a1a" stroke-width="1" paint-order="stroke">N1</text>
<rect x="1154.5" y="66" width="13.5" height="17" rx="0.8" fill="#e8e8e8" stroke="#111" stroke-width="0.8"/>
<path d="M1155.5 79.5 L1167 79.5 M1155.5 81.5 L1167 81.5" stroke="#222" stroke-width="0.9"/>
<g stroke="#111" stroke-width="0.6">
<rect x="1196" y="68" width="5" height="4" fill="#0fd0a0"/><rect x="1196" y="73" width="5" height="10" fill="#ececec"/>
<path d="M1203 72 L1203 68.5 L1206 66 L1209 66 L1212 68.5 L1212 72 Z" fill="#0fd0a0"/><path d="M1203 73 L1212 73 L1212 76 L1210 78 L1205 78 L1203 76 Z" fill="#ececec"/><rect x="1205" y="78.5" width="5" height="4.5" fill="#ececec"/>
</g>
<rect x="1227" y="61" width="1" height="26" fill="#555"/>
<rect x="1241" y="64.8" width="18" height="18" rx="1.5" fill="#ececec" stroke="#111" stroke-width="0.8"/>
<rect x="1243" y="66.8" width="14" height="6" rx="0.8" fill="#c4c4c4" stroke="#222" stroke-width="0.8"/>
<g fill="#222"><rect x="1243" y="76" width="2" height="2"/><rect x="1246" y="76" width="2" height="2"/><rect x="1243" y="79" width="2" height="2"/><rect x="1246" y="79" width="2" height="2"/></g>
<circle cx="1254.6" cy="78.3" r="3.3" fill="#0fd0a0" stroke="#222" stroke-width="0.8"/>
<g fill="none" stroke-width="1.3">
<path d="M1283.5 66.5 L1290 81 L1295.5 66.5 L1303.5 81" stroke="#dddddd"/>
<path d="M1283.5 74 L1289 68.5 L1295 73 L1302 67" stroke="#0fd0a0"/>
<path d="M1283.5 79 L1289 78 L1293 76.5 L1298 78.5 L1304 74.5" stroke="#2a8af0"/>
</g>
<g stroke="#111" stroke-width="0.8">
<rect x="1330.5" y="64.6" width="11" height="2" fill="#0fd0a0"/>
<rect x="1330" y="67.5" width="12" height="8" fill="url(#stackg)"/>
<rect x="1327.8" y="76" width="16.5" height="4.3" rx="1" fill="#ececec"/>
<rect x="1329.5" y="80.8" width="13" height="2.6" rx="0.5" fill="#ececec"/>
</g>
<rect x="1370" y="69" width="4" height="4" fill="#0fd0a0"/><rect x="1370" y="74" width="4" height="4" fill="#0fd0a0"/><rect x="1370" y="79" width="4" height="4" fill="#0fd0a0"/><rect x="1375" y="64" width="4" height="4" fill="#ececec"/><rect x="1375" y="69" width="4" height="4" fill="#ececec"/><rect x="1375" y="74" width="4" height="4" fill="#ececec"/><rect x="1375" y="79" width="4" height="4" fill="#ececec"/><rect x="1380" y="74" width="4" height="4" fill="#0fd0a0"/><rect x="1380" y="79" width="4" height="4" fill="#0fd0a0"/><rect x="1385" y="69" width="4" height="4" fill="#ececec"/><rect x="1385" y="74" width="4" height="4" fill="#ececec"/><rect x="1385" y="79" width="4" height="4" fill="#ececec"/></svg>
<svg style="left:0;top:0" width="600" height="700"><defs><linearGradient id="vsep" x1="0" y1="0" x2="1" y2="0"><stop offset="0" stop-color="#666" stop-opacity="0"/><stop offset="0.5" stop-color="#777"/><stop offset="1" stop-color="#666" stop-opacity="0"/></linearGradient>
<linearGradient id="vsurf" x1="0" y1="0" x2="1" y2="0"><stop offset="0" stop-color="#10b88c"/><stop offset="0.6" stop-color="#40f0c0"/><stop offset="1" stop-color="#20c89a"/></linearGradient>
<linearGradient id="vgray" x1="0" y1="0" x2="1" y2="0"><stop offset="0" stop-color="#777"/><stop offset="0.6" stop-color="#ddd"/><stop offset="1" stop-color="#999"/></linearGradient></defs>
<rect x="454" y="49" width="40" height="592" rx="20" fill="#2e2e30"/>
<path d="M469.7 70.7 L474.4 65.7 L479 70.7 Z" fill="#ececec"/>
<g fill="none" stroke="#ececec" stroke-width="1.3"><rect x="470" y="95" width="8.6" height="6" rx="1"/><rect x="467.5" y="101" width="13.5" height="5.5" rx="1"/><rect x="470" y="106.5" width="8.6" height="3.2"/></g>
<g fill="#ececec" stroke="#111" stroke-width="0.8"><rect x="470" y="130" width="8.6" height="5.5" rx="1"/><rect x="467.5" y="136" width="13.5" height="5" rx="1"/><rect x="470" y="141.5" width="8.6" height="2.5"/></g>
<circle cx="474" cy="170.7" r="14.6" fill="none" stroke="#13876a" stroke-width="1.5"/>
<g stroke="#222" stroke-width="0.6"><rect x="470.5" y="163" width="7" height="1.5" fill="#5a9a8a"/><rect x="470" y="165.5" width="8" height="5.5" fill="#3a9a80"/><rect x="468" y="172" width="12" height="4" fill="#9a9a9a"/><rect x="470" y="177" width="8" height="1.5" fill="#9a9a9a"/></g>
<rect x="468" y="197.8" width="12" height="14.2" fill="#ececec"/>
<circle cx="474" cy="238.5" r="14.6" fill="none" stroke="#13876a" stroke-width="1.5"/>
<g stroke="#111" stroke-width="0.6"><rect x="470.5" y="231" width="7" height="1.5" fill="#1fd6a6"/><rect x="470" y="233" width="8" height="5.5" fill="#1fd6a6"/><rect x="468" y="239" width="12" height="4.5" fill="#1fd6a6"/><rect x="470" y="244" width="8" height="1.5" fill="#1fd6a6"/></g>
<g stroke="#111" stroke-width="0.6"><rect x="469" y="265.7" width="11" height="2.8" fill="#ececec"/><rect x="468.5" y="269" width="12" height="3.5" fill="#ececec"/><path d="M470.5 273 L478.5 273 L475 280.5 L474 280.5 Z" fill="#f0c020"/></g>
<circle cx="474" cy="306.9" r="14.6" fill="none" stroke="#13876a" stroke-width="1.5"/>
<g stroke="#111" stroke-width="0.5"><rect x="471" y="299" width="6" height="1.5" fill="#ececec"/><rect x="471" y="301" width="6" height="2.5" fill="#ececec"/><rect x="471.5" y="304" width="5" height="10" fill="#f0c020"/><path d="M471.5 308 L476.5 305 M471.5 311 L476.5 308 M471.5 314 L476.5 311" stroke="#222" stroke-width="0.9"/></g>
<circle cx="474" cy="340.7" r="14.6" fill="none" stroke="#13876a" stroke-width="1.5"/>
<g stroke="#111" stroke-width="0.5"><circle cx="474" cy="334" r="2" fill="#ececec"/><path d="M467 347.5 L467 341 L470 336 L472 336 L472 347.5 Z" fill="#f0c020"/><path d="M476 336 L478 336 L481 341 L481 347.5 L476 347.5 Z" fill="#ececec"/><rect x="472" y="340" width="4" height="3" fill="#ececec"/></g>
<circle cx="474" cy="375" r="14.6" fill="none" stroke="#13876a" stroke-width="1.5"/>
<g stroke="#111" stroke-width="0.6"><path d="M468 368 L479 368 L481 370 L481 382 L468 382 L468 378 L471 378 L471 375 L468 375 Z" fill="#ececec"/><path d="M470 371 L474 371 L474 375 L470 375 Z" fill="#2e2e30"/></g>
<g stroke="#dddddd" stroke-width="1.4" fill="none"><path d="M467.5 408 L474 401.9 M467.5 412.5 L478.5 401.9 M469 415.2 L481 403.5 M473.5 415.2 L481 408"/></g>
<rect x="456" y="431" width="36" height="1" fill="url(#vsep)"/>
<circle cx="474" cy="454" r="4.2" fill="#1fd6a6"/>
<path d="M466.5 495 L466.5 486.5 A4 4 0 0 1 474.3 486.5 L474.3 490 A3.8 3.8 0 0 0 481.8 490 L481.8 481" fill="none" stroke="#ececec" stroke-width="1.3"/>
<path d="M467 527.5 L467 517 Q474.2 513.5 481.5 517 L481.5 527.5 Q474.2 523.5 467 527.5 Z" fill="url(#vsurf)" stroke="#111" stroke-width="0.6"/>
<path d="M467 562.5 L467 552.5 Q474.2 548.5 481.5 552.5 L481.5 562.5 Q474.2 558.5 467 562.5 Z" fill="url(#vgray)" stroke="#1fd6a6" stroke-width="1.2"/>
<g fill="none" stroke="#1fd6a6" stroke-width="1.2"><path d="M467 597 L467 586.5 Q474.2 582.5 481.5 586.5 L481.5 597 Q474.2 593 467 597 Z"/><path d="M474.2 584.5 L474.2 595 M467 591 Q474.2 587.5 481.5 591"/></g>
<path d="M467 631.5 L467 620.5 Q474.2 616.5 481.5 620.5 L481.5 631.5 Q474.2 627.5 467 631.5 Z" fill="url(#vgray)" stroke="#111" stroke-width="0.6"/>
<circle cx="480.5" cy="629.5" r="2.2" fill="#1fd6a6" stroke="#111" stroke-width="0.5"/>
</svg>
<div class="t" style="left:88px;top:627px;font-size:11px;color:#d6d6d6">Machining surfaces</div>
<div class="t" style="left:217px;top:627px;font-size:11px;color:#d6d6d6">First curve</div>
<div class="t" style="left:303px;top:627px;font-size:11px;color:#d6d6d6">Second curve</div>
<div class="t" style="left:88px;top:651px;font-size:11px;color:#d6d6d6">Extended Geometry</div>
<div class="t" style="left:217px;top:651px;font-size:11px;color:#d6d6d6">Surfaces for projection</div>
<div class="t" style="left:363px;top:651px;font-size:11px;color:#d6d6d6">First Surface</div>
<div class="t" style="left:88px;top:675px;font-size:11px;color:#d6d6d6">Second Surface</div>
<div class="t" style="left:201px;top:675px;font-size:11px;color:#d6d6d6">Restrict Zone</div>
<div class="t" style="left:300px;top:675px;font-size:11px;color:#d6d6d6">Job Zone</div>
<div class="t" style="left:379px;top:675px;font-size:11px;color:#d6d6d6">Properties</div>
<div class="t" style="left:88px;top:699px;font-size:11px;color:#d6d6d6">Delete</div>
<svg style="left:0;top:0" width="450" height="820"><defs><linearGradient id="tflag" x1="0" y1="0" x2="1" y2="0"><stop offset="0" stop-color="#18b8a8"/><stop offset="0.6" stop-color="#70e0d8"/><stop offset="1" stop-color="#20b0a8"/></linearGradient></defs><rect x="71.5" y="626.5" width="13" height="13" fill="none" stroke="#cfcfcf" stroke-width="1"/><rect x="73" y="628" width="10" height="10" fill="#f05a5a"/><rect x="201.5" y="626" width="2" height="14" fill="#f05a5a"/><rect x="210" y="626" width="2" height="14" fill="#f05a5a"/><rect x="287" y="626" width="2" height="14" fill="#f05a5a"/><rect x="295.5" y="626" width="2" height="14" fill="#f05a5a"/><rect x="71.5" y="650.5" width="13" height="13" fill="none" stroke="#f05a5a" stroke-width="1"/><rect x="73.5" y="652.5" width="9" height="9" fill="#111" stroke="#ddd" stroke-width="1"/><rect x="200.5" y="650.5" width="13" height="13" fill="none" stroke="#cfcfcf" stroke-width="1"/><rect x="202" y="652" width="10" height="10" fill="#f05a5a"/><rect x="346.5" y="650.5" width="13" height="13" fill="none" stroke="#cfcfcf" stroke-width="1"/><rect x="348" y="652" width="10" height="10" fill="#f05a5a"/><rect x="71.5" y="674.5" width="13" height="13" fill="none" stroke="#cfcfcf" stroke-width="1"/><rect x="73" y="676" width="10" height="10" fill="#f05a5a"/><g transform="translate(191 681)"><path d="M-6 1 L0 -6 L6 -3 L6 3 L0 6 L-6 4 Z" fill="#e07a7a"/><path d="M-6 1 L0 -6 L6 -3 L0 0 Z" fill="#f4b0b0"/><path d="M-6 1 L-3 -1 L-3 4 L-6 4 Z" fill="#eee"/></g><g transform="translate(290 681)"><path d="M-7 0 L0 -6 L7 0 L0 6 Z" fill="#3fa8a0"/><path d="M-7 -2 L0 -7 L7 -2 L0 2 Z" fill="#e8f4f4"/><path d="M-7 0 L0 5 L7 0 L7 2 L0 7 L-7 2 Z" fill="#2a8a80"/></g><g transform="translate(369 681)"><rect x="-6" y="-7" width="10" height="13" fill="#f0f0f0" stroke="#666" stroke-width="0.6"/><path d="M-4.5 -4 L2.5 -4 M-4.5 -1.5 L2.5 -1.5 M-4.5 1 L2.5 1" stroke="#333" stroke-width="0.9"/><rect x="1.5" y="2" width="5" height="5" fill="#20a8a0"/></g><path d="M72.5 699 L83.5 711 M83.5 699 L72.5 711" stroke="#f04848" stroke-width="2.4"/><rect x="72" y="725" width="359" height="19" fill="#000"/><rect x="77" y="728" width="13" height="13" rx="2" fill="#1fb89a"/><path d="M79.8 734.5 L82.5 737.3 L87.3 731.5" fill="none" stroke="#fff" stroke-width="1.8"/><path d="M94.5 729.5 Q100 727 103 729 Q106 731 110 729.5 L110 739.5 Q106 741 103 739 Q100 737 94.5 739.5 Z" fill="url(#tflag)"/><rect x="77.5" y="748.5" width="12" height="12" rx="1.5" fill="none" stroke="#1fb89a" stroke-width="1.3"/><rect x="77.5" y="766" width="12" height="12" rx="1.5" fill="none" stroke="#1fb89a" stroke-width="1.3"/><rect x="77.5" y="785" width="12" height="12" rx="1.5" fill="none" stroke="#1fb89a" stroke-width="1.3"/><g fill="none" stroke="#1fb89a" stroke-width="1.2" transform="translate(102 755)"><path d="M-6 -1 L-1 -6 Q1 -7 1 -5 L-5 2 Q-6 3 -4 3 L3 -4 Q5 -5 5 -3 L-1 4 Q-2 5 0 5 L5 0"/></g><g fill="none" stroke="#1fb89a" stroke-width="1.2" transform="translate(102 773)"><path d="M-6 -1 L-1 -6 Q1 -7 1 -5 L-5 2 Q-6 3 -4 3 L3 -4 Q5 -5 5 -3 L-1 4 Q-2 5 0 5 L5 0"/></g><g fill="none" stroke="#1fb89a" stroke-width="1.3" transform="translate(102 791)"><path d="M-7 1 L-1 -6 L7 -1 L1 6 Z"/><path d="M-4 -2.5 L4 2.5 M-3.5 3.5 L3.5 -3.5"/></g></svg>
<div class="t" style="left:114px;top:729px;font-size:12.15px;color:#1fc8a0">Machining surfaces (8 Items)</div>
<div class="t" style="left:114px;top:749px;font-size:11.8px;color:#e8e8e8">First curve (4 Curves)</div>
<div class="t" style="left:114px;top:767px;font-size:11.8px;color:#e8e8e8">Second curve (4 Curves)</div>
<div class="t" style="left:114px;top:786px;font-size:12.1px;color:#e8e8e8">Surfaces for projection (1 Mesh)</div>
<div class="a" style="left:575.5px;top:1041px;width:85px;height:30px;background:#2c2c2e;border-radius:4px"></div>
<svg style="left:0;top:0" width="1920" height="1080">
<g fill="none" stroke="#19d6b6" stroke-width="1.6"><path d="M582.5 1053 L582.5 1049 L586.5 1049 M593 1049 L597 1049 L597 1053 M597 1059 L597 1063 L593 1063 M586.5 1063 L582.5 1063 L582.5 1059"/></g>
<rect x="585.5" y="1052" width="8.5" height="8.5" fill="#fafafa"/>
<circle cx="618" cy="1056" r="8" fill="url(#sph)"/><path d="M610 1056 L626 1056 M618 1048 L618 1064" stroke="#555" stroke-width="0.7"/>
<g transform="translate(646 1056)"><path d="M-8 -3 L0 -8 L8 -4 L8 4 L0 8 L-8 4 Z" fill="#e8e8e8"/><path d="M-8 -3 L0 -8 L8 -4 L0 0 Z" fill="#fff"/><path d="M0 0 L8 -4 L8 4 L0 8 Z" fill="#bbb"/><path d="M-8 -1 L-1 2 L-6 4 L-1 6" stroke="#555" stroke-width="0.9" fill="none"/></g>
<rect x="828" y="1078" width="48" height="2" fill="#4c4c4c"/>
<rect x="1658.5" y="1041.3" width="29" height="29.3" rx="4" fill="#2b2b2d"/>
<path d="M1666.5 1056 L1679.5 1056 M1673 1049.5 L1673 1062.5" stroke="#d0d0d0" stroke-width="1.6"/>
<rect x="1694.5" y="1041.3" width="119.3" height="29.3" rx="4" fill="#2b2b2d"/>
<g transform="translate(1709 1057)"><path d="M-6 0.5 L0 -3 L6 0.5 L6 5 L0 8 L-6 5 Z" fill="#1a9a7a"/><path d="M0 -10 L0 4 M0 4 L-7 7 M0 4 L7 7" stroke="#e0e0e0" stroke-width="1" fill="none"/><circle cx="0" cy="-9" r="1.2" fill="#e0e0e0"/></g>
<rect x="1820.3" y="1041.3" width="29.4" height="29.3" rx="4" fill="#2b2b2d"/>
<path d="M1829 1061.5 L1841 1061.5 L1839.5 1059 L1839.5 1054 A4.5 4.5 0 0 0 1830.5 1054 L1830.5 1059 Z M1833 1063.5 L1837 1063.5" fill="none" stroke="#cfcfcf" stroke-width="1.2"/>
<rect x="1900.5" y="1042.5" width="9" height="27.5" rx="1.5" fill="#1c2a2a" stroke="#2a8f8f" stroke-width="1.3"/><rect x="1901" y="1059" width="8" height="10.5" fill="#2a9a9a"/>
<defs><radialGradient id="sph" cx="0.4" cy="0.35" r="0.7"><stop offset="0" stop-color="#fafafa"/><stop offset="1" stop-color="#6a6a6a"/></radialGradient></defs>
</svg>
<div class="t" style="left:1723px;top:1049px;font-size:14px;color:#d8d8d8">Global CS</div>
<div class="t" style="left:1867px;top:1051px;font-size:12.6px;color:#f0f0f0">39%</div>
</body></html>
